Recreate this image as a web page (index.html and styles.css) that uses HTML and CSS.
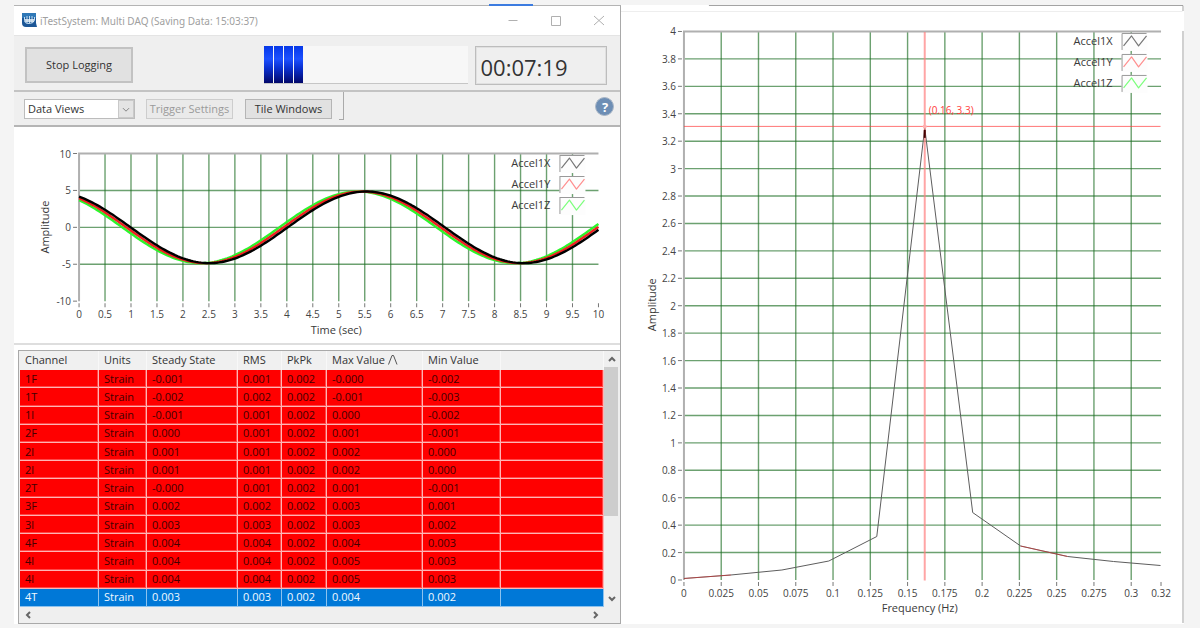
FILE: index.html
```html
<!DOCTYPE html>
<html lang="en">
<head>
<meta charset="utf-8">
<title>iTestSystem: Multi DAQ</title>
<link rel="stylesheet" href="styles.css">
</head>
<body>
<main class="desktop">
  <section class="window">
    <header class="titlebar">
      <svg class="app-icon" viewBox="0 0 15 15" aria-hidden="true">
        <path d="M0 0H14V10L15 14H4Q0 14 0 10Z" fill="#1c5797"/>
        <path d="M0 0H14V5H0Z" fill="#2f78b7"/>
        <path d="M2.500 4V7.500Q2.500 10.500 7 10.500T12.500 7.500V4M5 3V10M7.500 3V10M10 3V10" fill="none" stroke="#c3dcf0" stroke-width="1"/>
        <path d="M3 6H12V9H3Z" fill="#e7f2fa" opacity=".8"/>
      </svg>
      <h1 class="title">iTestSystem: Multi DAQ (Saving Data: 15:03:37)</h1>
      <div class="window-buttons">
        <button class="win-btn" aria-label="Minimize"><svg viewBox="0 0 12 12"><path d="M1.500 5.500H10.500"/></svg></button>
        <button class="win-btn" aria-label="Maximize"><svg viewBox="0 0 12 12"><path d="M1.500 1.500H10.500V10.500H1.500Z"/></svg></button>
        <button class="win-btn" aria-label="Close"><svg viewBox="0 0 12 12"><path d="M1 1L11 10M11 1L1 10"/></svg></button>
      </div>
      <span class="tab-marker"></span>
    </header>
    <div class="status-row">
      <button class="btn btn-stop">Stop Logging</button>
      <div class="progress" role="progressbar" aria-label="Logging">
        <span class="block"></span><span class="block"></span><span class="block"></span><span class="block"></span>
      </div>
      <output class="timer">00:07:19</output>
    </div>
    <div class="toolbar">
      <div class="select-wrap">
        <select class="select" aria-label="Data Views"><option>Data Views</option></select>
        <svg class="select-arrow" viewBox="0 0 16 18" aria-hidden="true"><path d="M4.500 8L8 11.500L11.500 8"/></svg>
      </div>
      <button class="btn btn-tool" disabled>Trigger Settings</button>
      <button class="btn btn-tool btn-tile">Tile Windows</button>
      <span class="divider"></span>
      <button class="help" aria-label="Help">?</button>
    </div>
    <div class="wave-panel"><svg id="wave" class="chart" viewBox="14 127 606 216" role="img" aria-label="Amplitude over time"></svg></div>
    <div class="grid-panel">
      <div class="grid-main">
        <table class="grid">
          <colgroup><col class="c-channel"><col class="c-units"><col class="c-steady"><col class="c-rms"><col class="c-pkpk"><col class="c-max"><col class="c-min"><col></colgroup>
          <thead><tr><th>Channel</th><th>Units</th><th>Steady State</th><th>RMS</th><th>PkPk</th><th>Max Value <svg class="sort" viewBox="0 0 10 10" aria-hidden="true"><path d="M.500 9.500L4 .500H5.500L9 9.500"/></svg></th><th>Min Value</th><th></th></tr></thead>
          <tbody>
            <tr><td>1F</td><td>Strain</td><td>-0.001</td><td>0.001</td><td>0.002</td><td>-0.000</td><td>-0.002</td><td></td></tr>
            <tr><td>1T</td><td>Strain</td><td>-0.002</td><td>0.002</td><td>0.002</td><td>-0.001</td><td>-0.003</td><td></td></tr>
            <tr><td>1l</td><td>Strain</td><td>-0.001</td><td>0.001</td><td>0.002</td><td>0.000</td><td>-0.002</td><td></td></tr>
            <tr><td>2F</td><td>Strain</td><td>0.000</td><td>0.001</td><td>0.002</td><td>0.001</td><td>-0.001</td><td></td></tr>
            <tr><td>2l</td><td>Strain</td><td>0.001</td><td>0.001</td><td>0.002</td><td>0.002</td><td>0.000</td><td></td></tr>
            <tr><td>2l</td><td>Strain</td><td>0.001</td><td>0.001</td><td>0.002</td><td>0.002</td><td>0.000</td><td></td></tr>
            <tr><td>2T</td><td>Strain</td><td>-0.000</td><td>0.001</td><td>0.002</td><td>0.001</td><td>-0.001</td><td></td></tr>
            <tr><td>3F</td><td>Strain</td><td>0.002</td><td>0.002</td><td>0.002</td><td>0.003</td><td>0.001</td><td></td></tr>
            <tr><td>3l</td><td>Strain</td><td>0.003</td><td>0.003</td><td>0.002</td><td>0.003</td><td>0.002</td><td></td></tr>
            <tr><td>4F</td><td>Strain</td><td>0.004</td><td>0.004</td><td>0.002</td><td>0.004</td><td>0.003</td><td></td></tr>
            <tr><td>4l</td><td>Strain</td><td>0.004</td><td>0.004</td><td>0.002</td><td>0.005</td><td>0.003</td><td></td></tr>
            <tr><td>4l</td><td>Strain</td><td>0.004</td><td>0.004</td><td>0.002</td><td>0.005</td><td>0.003</td><td></td></tr>
            <tr class="selected"><td>4T</td><td>Strain</td><td>0.003</td><td>0.003</td><td>0.002</td><td>0.004</td><td>0.002</td><td></td></tr>
          </tbody>
        </table>
        <div class="vscroll">
          <button class="scroll-btn" aria-label="Scroll up"><svg viewBox="0 0 8 8"><path d="M1 6L4 3L7 6"/></svg></button>
          <div class="thumb"></div>
          <div class="track"></div>
          <button class="scroll-btn" aria-label="Scroll down"><svg viewBox="0 0 8 8"><path d="M1 2L4 5L7 2"/></svg></button>
        </div>
      </div>
      <div class="hscroll">
        <button class="scroll-btn" aria-label="Scroll left"><svg viewBox="0 0 8 8"><path d="M6 1L3 4L6 7"/></svg></button>
        <button class="scroll-btn" aria-label="Scroll right"><svg viewBox="0 0 8 8"><path d="M2 1L5 4L2 7"/></svg></button>
      </div>
    </div>
  </section>
  <section class="spectrum-panel"><svg id="spectrum" class="chart" viewBox="621 5 563 619" role="img" aria-label="Amplitude by frequency"></svg></section>
</main>
<script src="charts.js"></script>
</body>
</html>
```

FILE: styles.css
```css
* { box-sizing: border-box; }
body {
  margin: 0;
  background: #f4f4f4;
  color: #333;
  font: 11px/16px "Open Sans", "Noto Sans", sans-serif;
}
button, select { font: inherit; color: inherit; }
h1 { margin: 0; }
.desktop { display: flex; align-items: stretch; padding: 5px 16px 4px 14px; }

.window {
  flex: 607 1 0;
  min-width: 0;
  display: flex;
  flex-direction: column;
  background: #fff;
  border-top: 1px solid #b4b4b4;
  border-right: 1px solid #a9a9a9;
}

.titlebar { position: relative; display: flex; align-items: center; height: 29px; padding: 0 15px 0 8px; gap: 3px; }
.app-icon { width: 15px; height: 15px; }
.title { flex: 1; font-family: "Noto Sans", "Open Sans", sans-serif; font-size: 10px; font-weight: 400; color: #a0a0a0; white-space: nowrap; }
.window-buttons { display: flex; gap: 31px; }
.win-btn { width: 12px; height: 12px; padding: 0; border: 0; background: none; }
.win-btn svg { display: block; fill: none; stroke: #b0b0b0; stroke-width: 1; }
.tab-marker { position: absolute; top: -2px; right: 87px; width: 44px; height: 2px; background: #3c7ce0; }

.status-row {
  display: flex;
  align-items: center;
  height: 57px;
  padding: 4px 13px 0 11px;
  background: #efefef;
  border-top: 1px solid #e4e4e4;
  border-bottom: 2px solid #c3c3c3;
}
.btn { height: 20px; padding: 0 2px; border: 1px solid #b5b5b5; background: #e1e1e1; white-space: nowrap; line-height: 16px; }
.btn:disabled { color: #9a9a9a; border-color: #cdcdcd; background: #eaeaea; }
.btn-stop { width: 108px; height: 36px; border-width: 2px; border-color: #c2c2c2; }
.btn-tool { width: 87px; }
.progress {
  flex: 1;
  display: flex;
  gap: 1px;
  height: 38px;
  margin-left: 131px;
  background: #f7f7f7;
  border-bottom: 1px solid #c6c6c6;
}
.block { width: 9px; background: linear-gradient(#0538e8, #1c50ff 35%, #0a30d0 60%, #02086a); }
.timer {
  width: 132px;
  height: 39px;
  margin-left: 7px;
  padding: 0 4px;
  border: 1px solid #bdbdbd;
  outline: 1px solid #e0e0e0;
  outline-offset: -2px;
  font-size: 22px;
  line-height: 40px;
  color: #333;
}

.toolbar {
  display: flex;
  align-items: center;
  height: 35px;
  padding: 0 6px 0 10px;
  background: #efefef;
  border-bottom: 2px solid #b5b5b5;
}
.select-wrap { position: relative; width: 111px; margin-right: 11px; }
.select {
  appearance: none;
  display: block;
  width: 100%;
  height: 20px;
  padding: 0 18px 0 3px;
  border: 1px solid #bcbcbc;
  border-radius: 0;
  background: #fff;
  line-height: 16px;
}
.select-arrow {
  position: absolute;
  top: 1px;
  right: 1px;
  width: 16px;
  height: 18px;
  background: #e4e4e4;
  border: 1px solid #c9c9c9;
  fill: none;
  stroke: #777;
  pointer-events: none;
}
.btn-tile { margin-left: 12px; }
.divider { align-self: flex-start; width: 5px; height: 28px; margin-left: 7px; border: solid #aaa; border-width: 0 1px 1px 0; }
.help {
  width: 19px;
  height: 19px;
  margin: 0 0 4px auto;
  padding: 0;
  border: 1px solid #a9b6c6;
  border-radius: 50%;
  background: #6d8eb5;
  color: #fff;
  font-size: 13px;
  font-weight: 700;
  line-height: 16px;
}

.chart { display: block; width: 100%; height: auto; fill: #3a3a3a; }
.wave-panel { border-bottom: 2px solid #dedede; }

.grid-panel { margin: 5px 0 0 4px; border: 1px solid #a9a9a9; border-right: 0; padding-left: 1px; background: #efefef; }
.grid-main { display: flex; }
.grid { flex: 1; min-width: 0; height: 256px; border-collapse: separate; border-spacing: 0; table-layout: fixed; }
.grid th { height: 19px; padding: 0 0 1px 5px; border-right: 1px solid #f8f8f8; background: #f0f0f0; font-weight: 400; text-align: left; white-space: nowrap; }
.grid td {
  padding: 0 0 0 5px;
  border-right: 1px solid #ffb4b4;
  border-bottom: 1px solid #ffb4b4;
  background: #f00;
  box-shadow: inset -1px -1px #ff4646;
  color: #420000;
  line-height: 16px;
}
.grid .selected td { background: #0078d7; color: #f0f8ff; border-color: #8cc2ee; box-shadow: none; }
.c-channel { width: 79px; }
.c-units { width: 48px; }
.c-steady { width: 91px; }
.c-rms { width: 44px; }
.c-pkpk { width: 45px; }
.c-max { width: 96px; }
.c-min { width: 78px; }
.sort { width: 10px; height: 10px; vertical-align: -1px; fill: none; stroke: #555; }
.vscroll { display: flex; flex-direction: column; width: 16px; }
.scroll-btn { display: flex; align-items: center; justify-content: center; width: 16px; height: 16px; padding: 0; border: 0; background: none; }
.scroll-btn svg { width: 8px; height: 8px; fill: none; stroke: #666; stroke-width: 2; }
.thumb { flex: 149 1 0; margin-right: 2px; background: #cdcdcd; }
.track { flex: 75 1 0; }
.hscroll { display: flex; justify-content: space-between; height: 16px; padding-right: 16px; }

.spectrum-panel { flex: 563 1 0; min-width: 0; background: #fff; }

.frame { stroke: #a2a2a2; stroke-width: 1; fill: none; }
.frame-soft { stroke: #eee; fill: none; }
.grid-line { stroke: #1e6f24; stroke-width: 1.4; opacity: .65; }
.axis { stroke: #b0b0b0; stroke-width: 2; fill: none; }
.tick { stroke: #777; stroke-width: 1; }
.tick-label { font-size: 10px; fill: #444; }
.axis-title, .legend-label { font-size: 11px; }
.mid { text-anchor: middle; }
.end { text-anchor: end; }
.trace { fill: none; stroke-linejoin: round; }
.swatch { fill: #fdfdfd; }
.swatch-edge { fill: none; stroke: #999; }
.cursor { stroke: #ff3c3c; opacity: .7; }
.cursor-wide { stroke-width: 2; stroke: #ff8080; }
.cursor-label { font-size: 10px; fill: #ff3c3c; }
```

FILE: charts.js
```js
const NS = "http://www.w3.org/2000/svg";

function add(svg, tag, attrs, text) {
  const el = document.createElementNS(NS, tag);
  for (const key in attrs) el.setAttribute(key, attrs[key]);
  if (text !== undefined) el.textContent = text;
  svg.appendChild(el);
  return el;
}

function line(svg, x1, y1, x2, y2, cls) {
  add(svg, "line", { x1, y1, x2, y2, class: cls });
}

function drawAxes(svg, p) {
  const sx = v => p.left + (v / p.maxX) * (p.right - p.left);
  const sy = v => p.bottom - ((v - p.minY) / (p.maxY - p.minY)) * (p.bottom - p.top);
  p.xTicks.forEach(v => {
    if (v > 0 && v < p.maxX) line(svg, sx(v), p.top, sx(v), p.bottom, "grid-line");
    line(svg, sx(v), p.bottom + 2, sx(v), p.bottom + 6, "tick");
    add(svg, "text", { x: sx(v), y: p.bottom + 17, class: "tick-label mid" }, v);
  });
  p.yTicks.forEach(v => {
    if (v > p.minY && v < p.maxY) line(svg, p.left, sy(v), p.right, sy(v), "grid-line");
    line(svg, p.left - 6, sy(v), p.left - 2, sy(v), "tick");
    add(svg, "text", { x: p.left - 8, y: sy(v) + 4, class: "tick-label end" }, v);
  });
  add(svg, "path", { d: `M${p.left} ${p.bottom}V${p.top}H${p.right}`, class: "axis" });
  return { sx, sy };
}

function drawLegend(svg, x, y) {
  [["Accel1X", "#777"], ["Accel1Y", "#ff8f8f"], ["Accel1Z", "#7dff7d"]].forEach(([name, color], i) => {
    const t = y + i * 21;
    add(svg, "text", { x: x - 9, y: t + 12, class: "legend-label end" }, name);
    add(svg, "rect", { x, y: t, width: 26, height: 18, class: "swatch" });
    add(svg, "path", { d: `M${x + .5} ${t + 17}V${t + .5}H${x + 25}`, class: "swatch-edge" });
    add(svg, "path", { d: `M${x + 2} ${t + 13}L${x + 10} ${t + 3}L${x + 17} ${t + 13}L${x + 25} ${t + 3}`, class: "trace", stroke: color, "stroke-width": 1.2 });
  });
}

function range(count, step) {
  return Array.from({ length: count }, (_, i) => +(i * step).toFixed(3));
}

const wave = document.getElementById("wave");
const w = drawAxes(wave, {
  left: 79, right: 598, top: 153.5, bottom: 301, maxX: 10, minY: -10, maxY: 10,
  xTicks: range(21, 0.5), yTicks: [-10, -5, 0, 5, 10]
});
[["#2cf52c", 0.16], ["#f02020", 0.08], ["#000", 0]].forEach(([stroke, lead]) => {
  const pts = range(201, 0.05).map(t =>
    `${w.sx(t).toFixed(2)},${w.sy(4.85 * Math.cos(2 * Math.PI * (t + lead - 5.53) / 6.05)).toFixed(2)}`);
  add(wave, "polyline", { points: pts.join(" "), class: "trace", stroke, "stroke-width": 2.4 });
});
drawLegend(wave, 559, 155);
add(wave, "text", { x: 336, y: 334, class: "axis-title mid" }, "Time (sec)");
add(wave, "text", { transform: "translate(49 227) rotate(-90)", class: "axis-title mid" }, "Amplitude");

const spectrum = document.getElementById("spectrum");
add(spectrum, "path", { d: "M709 5.5H1183.500V11M1183.500 31V624", class: "frame" });
add(spectrum, "path", { d: "M621 11.500H1183", class: "frame-soft" });
const s = drawAxes(spectrum, {
  left: 684, right: 1161.5, top: 31.5, bottom: 580.5, maxX: 0.32, minY: 0, maxY: 4,
  xTicks: range(13, 0.025).concat(0.32), yTicks: range(21, 0.2)
});
const bins = [[684, 579], [731, 575.5], [782, 570.5], [829, 561.5], [877, 537], [925, 128], [973, 513], [1021, 546.5], [1068, 557], [1114, 562], [1161, 566]];
const toPoints = list => list.map(([x, y]) => `${x},${y}`).join(" ");
add(spectrum, "polyline", { points: toPoints(bins), class: "trace", stroke: "#5c5c5c", "stroke-width": 1 });
[bins.slice(0, 2), bins.slice(7, 9)].forEach(part => {
  add(spectrum, "polyline", { points: toPoints(part), class: "trace", stroke: "#d83030", "stroke-width": 1, opacity: .6 });
});
line(spectrum, 925, 32, 925, 581, "cursor cursor-wide");
line(spectrum, 684, 126.5, 1161, 126.5, "cursor");
add(spectrum, "circle", { cx: 925, cy: 126.5, r: 2, fill: "#ffb0b0" });
add(spectrum, "path", { d: "M925 130V138", stroke: "#400", "stroke-width": 2 });
add(spectrum, "text", { x: 929, y: 114, class: "cursor-label" }, "(0.16, 3.3)");
drawLegend(spectrum, 1122, 33);
add(spectrum, "text", { x: 920, y: 613, class: "axis-title mid" }, "Frequency (Hz)");
add(spectrum, "text", { transform: "translate(656 305) rotate(-90)", class: "axis-title mid" }, "Amplitude");
```
